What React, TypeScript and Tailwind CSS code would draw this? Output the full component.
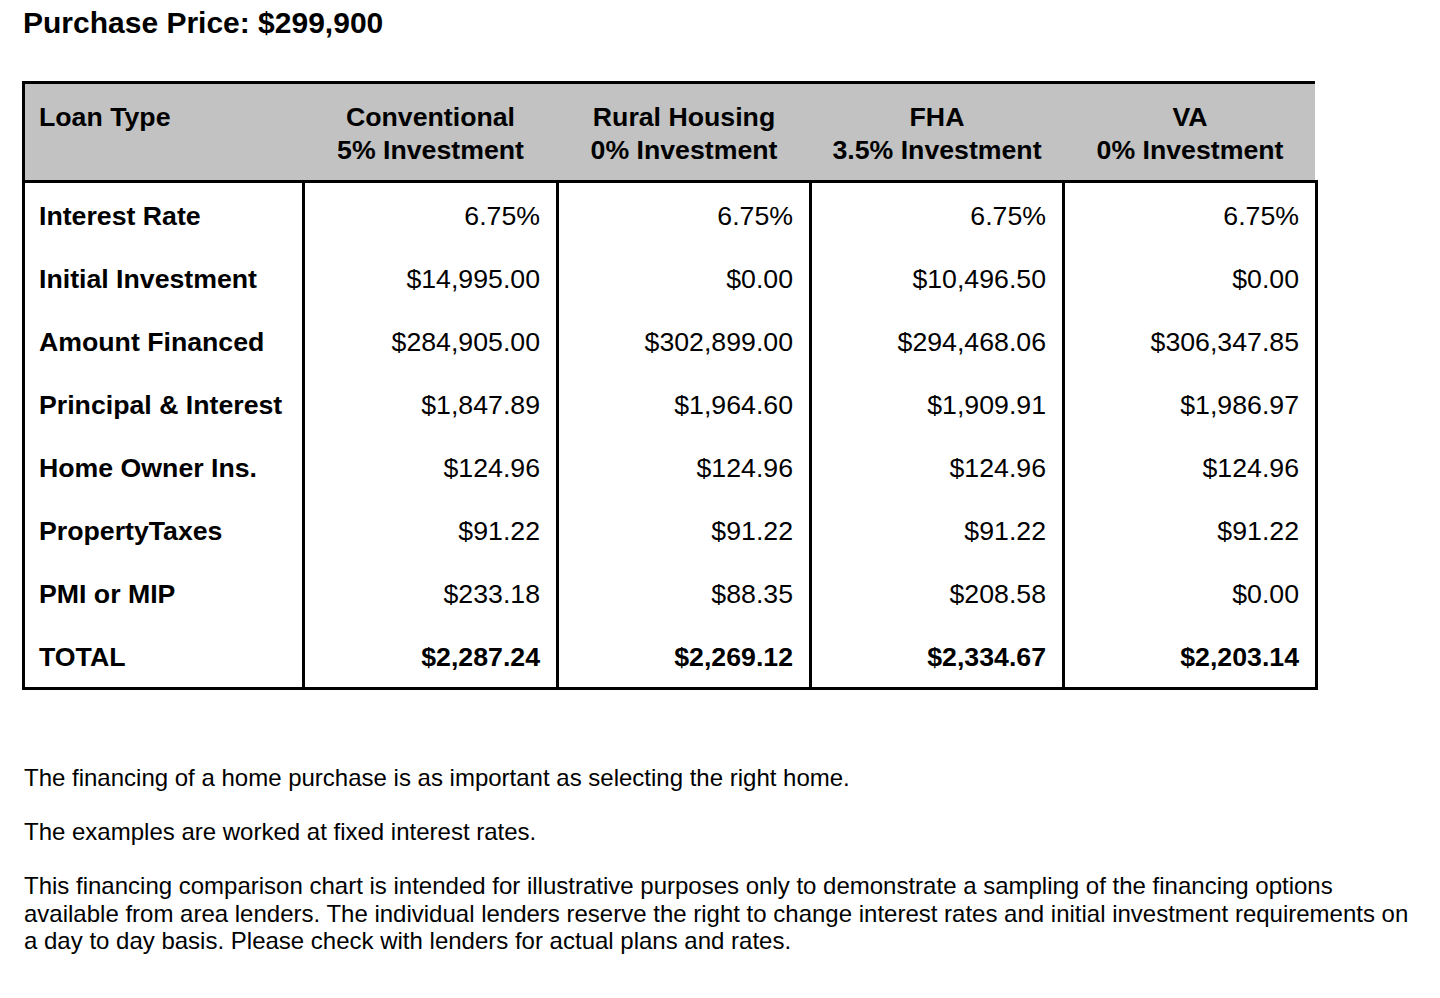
import React from "react";

const rows: { label: string; values: string[]; bold?: boolean }[] = [
  { label: "Interest Rate", values: ["6.75%", "6.75%", "6.75%", "6.75%"] },
  { label: "Initial Investment", values: ["$14,995.00", "$0.00", "$10,496.50", "$0.00"] },
  { label: "Amount Financed", values: ["$284,905.00", "$302,899.00", "$294,468.06", "$306,347.85"] },
  { label: "Principal & Interest", values: ["$1,847.89", "$1,964.60", "$1,909.91", "$1,986.97"] },
  { label: "Home Owner Ins.", values: ["$124.96", "$124.96", "$124.96", "$124.96"] },
  { label: "PropertyTaxes", values: ["$91.22", "$91.22", "$91.22", "$91.22"] },
  { label: "PMI or MIP", values: ["$233.18", "$88.35", "$208.58", "$0.00"] },
  { label: "TOTAL", values: ["$2,287.24", "$2,269.12", "$2,334.67", "$2,203.14"], bold: true },
];

const headers: [string, string][] = [
  ["Conventional", "5% Investment"],
  ["Rural Housing", "0% Investment"],
  ["FHA", "3.5% Investment"],
  ["VA", "0% Investment"],
];

export default function App() {
  return (
    <div
      className="min-h-[998px] w-[1440px] bg-white text-black pl-[22px] pr-[24px]"
      style={{ fontFamily: '"Liberation Sans", Arial, Helvetica, sans-serif' }}
    >
      <div className="h-[81px] pt-[0px] pl-[1px]">
        <h1 className="text-[30px] font-bold leading-normal">Purchase Price: $299,900</h1>
      </div>

      <div className="w-[1296px]">
        <div className="w-[1293px] border-t-[3px] border-l-[3px] border-black bg-[#c1c2c1] h-[99px] grid grid-cols-[277px_251px_250px_250px_250px] gap-x-[3px] text-[26.7px] font-bold leading-[33px]">
          <div className="pl-[14px] pt-[17px]">Loan Type</div>
          {headers.map(([a, b]) => (
            <div key={a} className="pt-[17px] text-center">
              <div>{a}</div>
              <div>{b}</div>
            </div>
          ))}
        </div>
        <div className="border-[3px] border-black bg-black grid grid-cols-[277px_251px_250px_250px_250px] gap-x-[3px] text-[26.7px] leading-normal">
          {rows.map((r) => (
            <React.Fragment key={r.label}>
              <div className="bg-white h-[63px] flex items-center pl-[14px] pt-[3px] font-bold">
                {r.label}
              </div>
              {r.values.map((v, i) => (
                <div
                  key={i}
                  className={`bg-white h-[63px] flex items-center justify-end pr-[16px] pt-[3px] ${r.bold ? "font-bold" : ""}`}
                >
                  {v}
                </div>
              ))}
            </React.Fragment>
          ))}
        </div>
      </div>

      <div className="pt-[74px] pl-[2px] text-[24px] leading-[27.5px]">
        <p className="mb-[26.5px]">
          The financing of a home purchase is as important as selecting the right home.
        </p>
        <p className="mb-[26.5px]">The examples are worked at fixed interest rates.</p>
        <p>
          This financing comparison chart is intended for illustrative purposes only to demonstrate a
          sampling of the financing options available from area lenders. The individual lenders
          reserve the right to change interest rates and initial investment requirements on a day to
          day basis. Please check with lenders for actual plans and rates.
        </p>
      </div>
    </div>
  );
}
